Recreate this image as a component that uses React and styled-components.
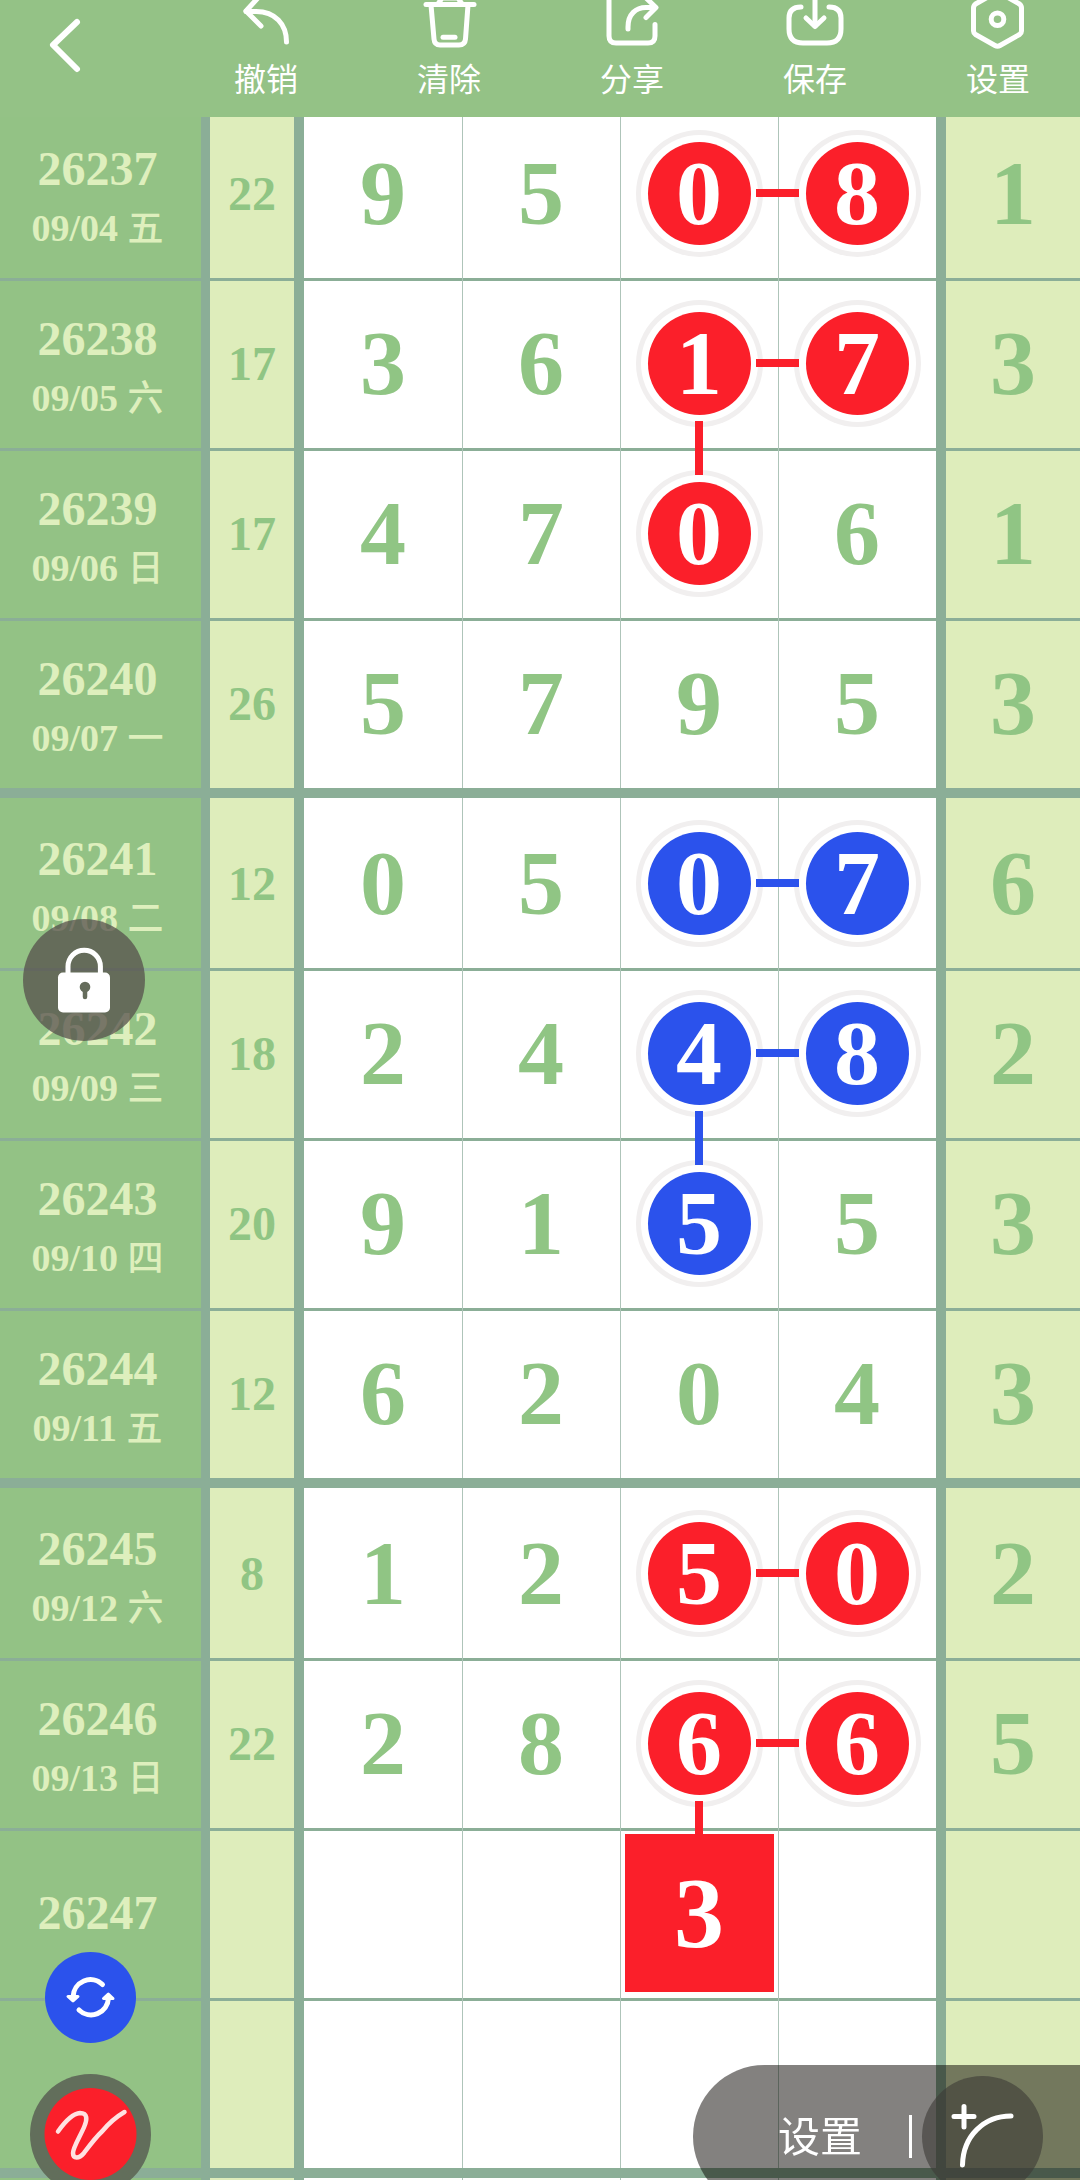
import React, { useState } from "react";
import styled, { createGlobalStyle, css } from "styled-components";

const RED = "#fb1f2a";
const BLUE = "#2b52ec";
const LINE = "#8bae97";

// marks: keyed by column, right / down draw a connector towards the next marked cell
const groups = [
  [
    { issue: "26237", date: "09/04", day: "五", sum: 22, nums: [9, 5, 0, 8], last: 1, color: RED, marks: { 2: { right: true }, 3: {} } },
    { issue: "26238", date: "09/05", day: "六", sum: 17, nums: [3, 6, 1, 7], last: 3, color: RED, marks: { 2: { right: true, down: 54 }, 3: {} } },
    { issue: "26239", date: "09/06", day: "日", sum: 17, nums: [4, 7, 0, 6], last: 1, color: RED, marks: { 2: {} } },
    { issue: "26240", date: "09/07", day: "一", sum: 26, nums: [5, 7, 9, 5], last: 3 },
  ],
  [
    { issue: "26241", date: "09/08", day: "二", sum: 12, nums: [0, 5, 0, 7], last: 6, color: BLUE, marks: { 2: { right: true }, 3: {} } },
    { issue: "26242", date: "09/09", day: "三", sum: 18, nums: [2, 4, 4, 8], last: 2, color: BLUE, marks: { 2: { right: true, down: 54 }, 3: {} } },
    { issue: "26243", date: "09/10", day: "四", sum: 20, nums: [9, 1, 5, 5], last: 3, color: BLUE, marks: { 2: {} } },
    { issue: "26244", date: "09/11", day: "五", sum: 12, nums: [6, 2, 0, 4], last: 3 },
  ],
  [
    { issue: "26245", date: "09/12", day: "六", sum: 8, nums: [1, 2, 5, 0], last: 2, color: RED, marks: { 2: { right: true }, 3: {} } },
    { issue: "26246", date: "09/13", day: "日", sum: 22, nums: [2, 8, 6, 6], last: 5, color: RED, marks: { 2: { right: true, down: 36 }, 3: {} } },
    { issue: "26247", nums: ["", "", 3, ""], color: RED, marks: { 2: { square: true } } },
    { nums: ["", "", "", ""] },
  ],
  [{ nums: ["", "", "", ""] }],
];

const tools = [
  {
    name: "撤销",
    icon: (
      <>
        <path d="M27.500 -6L12 11L27 26" />
        <path d="M12 11.500H22C41 11.500 52.500 24 52.500 42" />
      </>
    ),
  },
  {
    name: "清除",
    icon: (
      <>
        <path d="M9 4.500H57" />
        <path d="M21 4L25 -2H41L45 4" />
        <path d="M14 5L17 39Q17.500 45 23 45H42Q48 45 48.500 39L51 5" />
        <path d="M26 37.300H38" />
      </>
    ),
  },
  {
    name: "分享",
    icon: (
      <>
        <path d="M36 -6H15Q9 -6 9 0V36Q9 43 16 43H48Q55 43 55 36V24.500" />
        <path d="M28 29V27C28 14 36 7.500 46 7.500H55" />
        <path d="M44 -4L56 7.500L46 17.500" />
      </>
    ),
  },
  {
    name: "保存",
    icon: (
      <>
        <path d="M18 7Q6 7 6 18V29Q6 43 20 43H44Q58 43 58 29V18Q58 7 46 7" />
        <path d="M32 -4V26" />
        <path d="M23 18L32 26.500L41 18" />
      </>
    ),
  },
  {
    name: "设置",
    icon: (
      <>
        <path d="M29 -7Q31.500 -8.500 34 -7L53.500 4Q55.500 5.500 55.500 8V31Q55.500 33 53.500 34.500L34 45.500Q31.500 47 29 45.500L9.500 34.500Q7.500 33 7.500 31V8Q7.500 5.500 9.500 4Z" />
        <circle cx="31.500" cy="19.300" r="6.300" />
      </>
    ),
  },
];

const NumberCell = ({ value, mark, color, first }) => (
  <Cell $divided={!first} $raised={mark && (mark.right || mark.down)}>
    {!mark && value}
    {mark && (mark.square ? <Square $color={color}>{value}</Square> : <Ball $color={color}>{value}</Ball>)}
    {mark?.right && <RightLink $color={color} />}
    {mark?.down && <DownLink $color={color} $length={mark.down} />}
  </Cell>
);

const App = () => {
  const [locked, setLocked] = useState(true);

  return (
    <Page>
      <GlobalStyle />
      <Header>
        <BackButton aria-label="返回">
          <svg width="36" height="60" viewBox="0 0 36 60">
            <path d="M30 7L6 30L30 54" />
          </svg>
        </BackButton>
        <Toolbar>
          {tools.map((tool) => (
            <ToolButton key={tool.name}>
              <svg width="64" height="50" viewBox="0 0 64 50">
                {tool.icon}
              </svg>
              {tool.name}
            </ToolButton>
          ))}
        </Toolbar>
      </Header>

      <Board>
        <colgroup>
          <IssueCol />
          <SumCol />
          <col span="4" />
          <LastCol />
        </colgroup>
        {groups.map((rows, g) => (
          <Group key={g}>
            {rows.map((row, r) => (
              <tr key={r}>
                <IssueCell>
                  <Issue>{row.issue}</Issue>
                  {row.date && (
                    <DateText>
                      {row.date} <Weekday>{row.day}</Weekday>
                    </DateText>
                  )}
                </IssueCell>
                <SumCell>{row.sum}</SumCell>
                {row.nums.map((n, i) => (
                  <NumberCell key={i} value={n} first={i === 0} mark={row.marks?.[i]} color={row.color} />
                ))}
                <LastCell>{row.last}</LastCell>
              </tr>
            ))}
          </Group>
        ))}
      </Board>

      <LockButton aria-label="锁定" aria-pressed={locked} onClick={() => setLocked(!locked)}>
        <svg width="122" height="122" viewBox="0 0 122 122">
          <path d="M45 56V47.500A16.200 16.200 0 0 1 77.400 47.500V56" fill="none" stroke="#fff" strokeWidth="5" />
          <rect x="35" y="53.500" width="52" height="40" rx="5" fill="#fff" />
          <circle cx="62" cy="68" r="5.300" fill="#656c5b" />
          <path d="M62 70V78" stroke="#656c5b" strokeWidth="4.500" strokeLinecap="round" />
        </svg>
      </LockButton>

      <PenTools>
        <ColorButton aria-label="切换颜色">
          <svg width="91" height="91" viewBox="0 0 91 91">
            <path d="M57.500 32.500A17.500 18 0 0 0 28 45" />
            <path d="M34 58A17.500 18 0 0 0 63.500 46" />
            <path className="head" d="M23 44.500H33L28 49Z" />
            <path className="head" d="M58.500 46.500H68L63.300 42Z" />
          </svg>
        </ColorButton>
        <PenButton aria-label="画笔">
          <svg width="121" height="121" viewBox="0 0 121 121">
            <circle cx="60.500" cy="60" r="46" fill={RED} />
            <path
              d="M28 57.500C34 49 42 39.500 50 39C58 39 57 46 54.500 52C51 61 43 73 43 79C43 85 49 85 54 79C60 71 65 64 72 57.500C79 49 86 43 94.500 38"
              fill="none"
              stroke="#ffe1e1"
              strokeWidth="4.500"
              strokeLinecap="round"
            />
          </svg>
        </PenButton>
      </PenTools>

      <BottomBar>
        <SettingButton>设置</SettingButton>
        <Divider />
        <CurveButton aria-label="添加曲线">
          <svg width="121" height="121" viewBox="0 0 121 121">
            <path d="M32 40.500H52M42 30.500V51" />
            <path d="M89 40C62 40 41 60 40.500 89" />
          </svg>
        </CurveButton>
      </BottomBar>
    </Page>
  );
};

export default App;

const GlobalStyle = createGlobalStyle`
  body {
    margin: 0;
    background: #fff;
  }

  button {
    padding: 0;
    border: none;
    background: none;
    color: #fff;
    font-family: "Noto Sans CJK SC", sans-serif;
    cursor: pointer;
  }

  svg {
    display: block;
  }
`;

const Page = styled.div`
  height: 100vh;
  overflow: hidden;
`;

const Header = styled.header`
  position: relative;
  z-index: 2;
  display: flex;
  align-items: flex-start;
  justify-content: space-between;
  height: 117px;
  padding: 0 50px 0 47px;
  background: #94c286;
`;

const BackButton = styled.button`
  margin-top: 15px;

  path {
    fill: none;
    stroke: #fff;
    stroke-width: 6;
    stroke-linecap: round;
    stroke-linejoin: round;
  }
`;

const Toolbar = styled.nav`
  display: flex;
  flex: 0 1 796px;
  justify-content: space-between;
`;

const ToolButton = styled.button`
  font-size: 32px;
  line-height: 54px;

  svg {
    fill: none;
    stroke: #fff;
    stroke-width: 5;
    stroke-linecap: round;
    stroke-linejoin: round;
  }
`;

/* the first row is partly scrolled under the header */
const Board = styled.table`
  width: 100%;
  margin-top: -9px;
  table-layout: fixed;
  border-collapse: separate;
  border-spacing: 0;
  font-family: "Liberation Serif", "Noto Sans CJK SC", serif;
  font-weight: bold;
  text-align: center;
`;

const IssueCol = styled.col`
  width: 210px;
`;

const SumCol = styled.col`
  width: 94px;
`;

const LastCol = styled.col`
  width: 144px;
`;

const Group = styled.tbody`
  td,
  th {
    box-sizing: border-box;
    height: 170px;
    padding: 0;
  }

  tr:last-child > * {
    height: 180px;
    border-bottom: 10px solid ${LINE};
  }

  tr:not(:first-child) > * {
    background-image: linear-gradient(${LINE}, ${LINE});
    background-size: 100% 3px;
    background-repeat: no-repeat;
  }
`;

const IssueCell = styled.th`
  border-right: 9px solid ${LINE};
  background-color: #93c285;
  color: #deefbd;
`;

const Issue = styled.div`
  padding-right: 6px;
  font-size: 48px;
  line-height: 54px;

  &:not(:only-child) {
    padding-top: 12px;
  }
`;

const DateText = styled.div`
  padding-right: 6px;
  font-size: 38px;
  line-height: 58px;
`;

const Weekday = styled.span`
  font-family: "Noto Sans CJK SC", sans-serif;
  font-size: 36px;
  font-weight: 500;
`;

const SumCell = styled.td`
  border-right: 10px solid ${LINE};
  background-color: #deedbb;
  color: #90c584;
  font-size: 48px;
`;

const Cell = styled.td`
  position: relative;
  z-index: ${({ $raised }) => ($raised ? 1 : 0)};
  color: #90c584;
  font-size: 92px;
  line-height: 102px;
  ${({ $divided }) =>
    $divided &&
    css`
      box-shadow: inset 1px 0 #aec4b9;
    `}
`;

const LastCell = styled.td`
  border-left: 10px solid ${LINE};
  background-color: #deedbb;
  color: #90c584;
  font-size: 92px;
  line-height: 102px;
`;

const Ball = styled.span`
  display: block;
  width: 103px;
  height: 103px;
  margin: 0 auto;
  border-radius: 50%;
  background: ${({ $color }) => $color};
  box-shadow: 0 0 0 7px #fff, 0 0 0 12px #f1efef;
  color: #fff;
`;

const Square = styled.span`
  display: block;
  width: 149px;
  height: 158px;
  margin: 0 auto;
  background: ${({ $color }) => $color};
  color: #fff;
  font-size: 100px;
  line-height: 158px;
`;

const RightLink = styled.i`
  position: absolute;
  top: calc(50% - 4px);
  left: calc(50% + 57px);
  width: 43px;
  height: 8px;
  background: ${({ $color }) => $color};
`;

const DownLink = styled.i`
  position: absolute;
  top: calc(50% + 58px);
  left: calc(50% - 4px);
  width: 8px;
  height: ${({ $length }) => $length}px;
  background: ${({ $color }) => $color};
`;

const LockButton = styled.button`
  position: fixed;
  top: 919px;
  left: 23px;
  z-index: 3;
  border-radius: 50%;
  background: rgba(85, 79, 76, 0.75);
`;

const PenTools = styled.div`
  position: fixed;
  bottom: -15px;
  left: 30px;
  z-index: 3;
  display: flex;
  flex-direction: column;
  align-items: center;
  gap: 31px;
`;

const ColorButton = styled.button`
  border-radius: 50%;
  background: ${BLUE};

  path {
    fill: none;
    stroke: #fff;
    stroke-width: 5;
    stroke-linecap: round;
    stroke-linejoin: round;
  }

  .head {
    fill: #fff;
    stroke-width: 3;
  }
`;

const PenButton = styled.button`
  border-radius: 50%;
  background: #626e5b;
`;

const BottomBar = styled.div`
  position: fixed;
  right: 0;
  bottom: -28px;
  z-index: 3;
  display: flex;
  align-items: center;
  box-sizing: border-box;
  height: 143px;
  padding: 0 37px 0 85px;
  border-radius: 72px 0 0 72px;
  background: rgba(8, 4, 0, 0.5);
`;

const SettingButton = styled.button`
  padding-bottom: 6px;
  font-size: 42px;
`;

const Divider = styled.span`
  width: 3px;
  height: 43px;
  margin: 0 10px 0 47px;
  background: #fff;
`;

const CurveButton = styled.button`
  border-radius: 50%;
  background: rgba(60, 58, 54, 0.6);

  path {
    fill: none;
    stroke: #fff;
    stroke-width: 5;
    stroke-linecap: round;
  }
`;
